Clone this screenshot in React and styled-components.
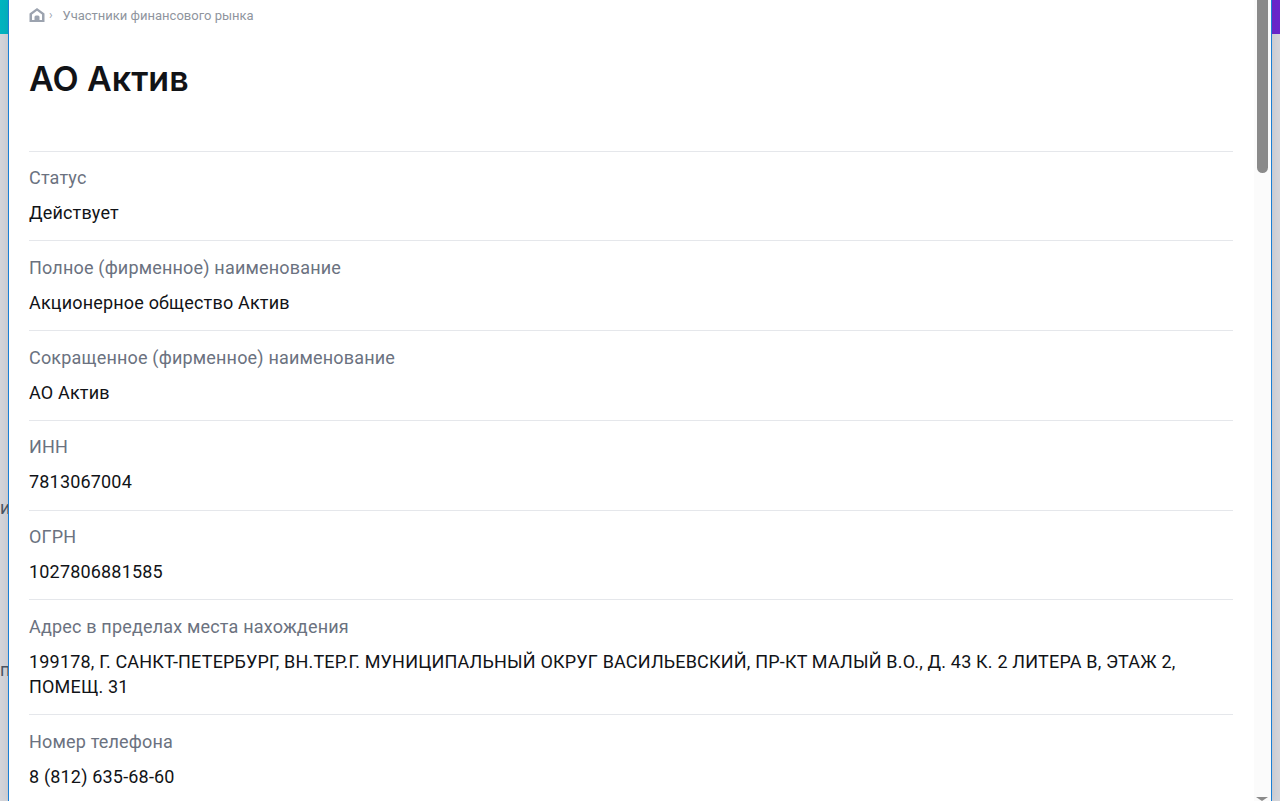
import React from "react";
import styled, { createGlobalStyle } from "styled-components";

const fields = [
  { label: "Статус", value: "Действует" },
  { label: "Полное (фирменное) наименование", value: "Акционерное общество Актив" },
  { label: "Сокращенное (фирменное) наименование", value: "АО Актив" },
  { label: "ИНН", value: "7813067004" },
  { label: "ОГРН", value: "1027806881585" },
  {
    label: "Адрес в пределах места нахождения",
    value:
      "199178, Г. САНКТ-ПЕТЕРБУРГ, ВН.ТЕР.Г. МУНИЦИПАЛЬНЫЙ ОКРУГ ВАСИЛЬЕВСКИЙ, ПР-КТ МАЛЫЙ В.О., Д. 43 К. 2 ЛИТЕРА В, ЭТАЖ 2, ПОМЕЩ. 31",
  },
  { label: "Номер телефона", value: "8 (812) 635-68-60" },
];

const App = () => {
  return (
    <Page>
      <GlobalStyle />
      <TopBand />
      <Backdrop>
        <BehindLetter $top={498}>и</BehindLetter>
        <BehindLetter $top={660}>п</BehindLetter>
      </Backdrop>
      <Modal>
        <Content>
          <Breadcrumbs>
            <svg width="16" height="14" viewBox="0 0 16 14">
              <path
                fill="#9ca3af"
                fillRule="evenodd"
                d="M8 0 15.500 5.500V14H.5V5.500ZM8 2.800 3 6.500V12H5.500V9Q5.500 7.500 7 7.500H9Q10.500 7.500 10.500 9V12H13V6.500Z"
              />
            </svg>
            <Chevron>›</Chevron>
            <Crumb>Участники финансового рынка</Crumb>
          </Breadcrumbs>
          <Title>АО Актив</Title>
          <List>
            {fields.map((f) => (
              <Row key={f.label}>
                <Label>{f.label}</Label>
                <Value>{f.value}</Value>
              </Row>
            ))}
          </List>
        </Content>
        <ScrollTrack>
          <ScrollThumb />
          <ScrollArrow />
        </ScrollTrack>
      </Modal>
    </Page>
  );
};

const GlobalStyle = createGlobalStyle`
  html, body {
    margin: 0;
    padding: 0;
    height: 100%;
    overflow: hidden;
  }
  body {
    font-family: Roboto, Inter, "Liberation Sans", sans-serif;
  }
`;

const Page = styled.div`
  position: relative;
  width: 1280px;
  height: 801px;
  overflow: hidden;
  background: #d4d5da;
`;

const TopBand = styled.div`
  height: 34px;
  background: linear-gradient(90deg, #00b5c0 0%, #2a7fd0 50%, #6a25cc 100%);
`;

const Backdrop = styled.div`
  position: relative;
  width: 8px;
`;

const BehindLetter = styled.span`
  position: absolute;
  top: ${(p) => p.$top - 34}px;
  left: 0;
  font-size: 18px;
  line-height: 20px;
  color: #4b5563;
`;

const Modal = styled.div`
  position: absolute;
  top: 0;
  left: 8px;
  width: 1264px;
  height: 801px;
  box-sizing: border-box;
  display: flex;
  background: #fff;
  border-left: 1px solid #1a7fd4;
  border-right: 1px solid #1a7fd4;
  box-shadow: 0 0 8px rgba(60, 60, 80, 0.15);
`;

const Content = styled.div`
  flex: 1;
  min-width: 0;
  padding: 0 21px 0 20px;
`;

const Breadcrumbs = styled.div`
  display: flex;
  align-items: center;
  height: 30px;
  color: #9ca3af;
  svg {
    flex: none;
  }
`;

const Chevron = styled.span`
  margin-left: 4px;
  font-size: 12px;
  line-height: 14px;
`;

const Crumb = styled.span`
  margin-left: 10px;
  font-size: 13px;
  color: #8f959e;
`;

const Title = styled.h1`
  margin: 27px 0 0;
  height: 93.700px;
  font-family: Inter, sans-serif;
  font-size: 34px;
  font-weight: 600;
  line-height: 44px;
  color: #111317;
`;

const List = styled.div`
  display: flex;
  flex-direction: column;
`;

const Row = styled.div`
  padding: 13.600px 0 15.150px;
  border-top: 1px solid #e5e7eb;
`;

const Label = styled.div`
  font-size: 18px;
  line-height: 25px;
  letter-spacing: 0.18px;
  color: #6b7280;
`;

const Value = styled.div`
  margin-top: 10px;
  font-size: 18px;
  line-height: 25px;
  letter-spacing: 0.18px;
  color: #111317;
`;

const ScrollTrack = styled.div`
  position: relative;
  flex: none;
  width: 17px;
  background: #fbfbfb;
`;

const ScrollThumb = styled.div`
  margin: 0 auto;
  width: 11px;
  height: 173px;
  background: #8a8a8a;
  border-radius: 0 0 6px 6px;
`;

const ScrollArrow = styled.div`
  position: absolute;
  bottom: 0;
  left: 2px;
  width: 0;
  height: 0;
  border-left: 6px solid transparent;
  border-right: 6px solid transparent;
  border-top: 4px solid #8a8a8a;
`;

export default App;
